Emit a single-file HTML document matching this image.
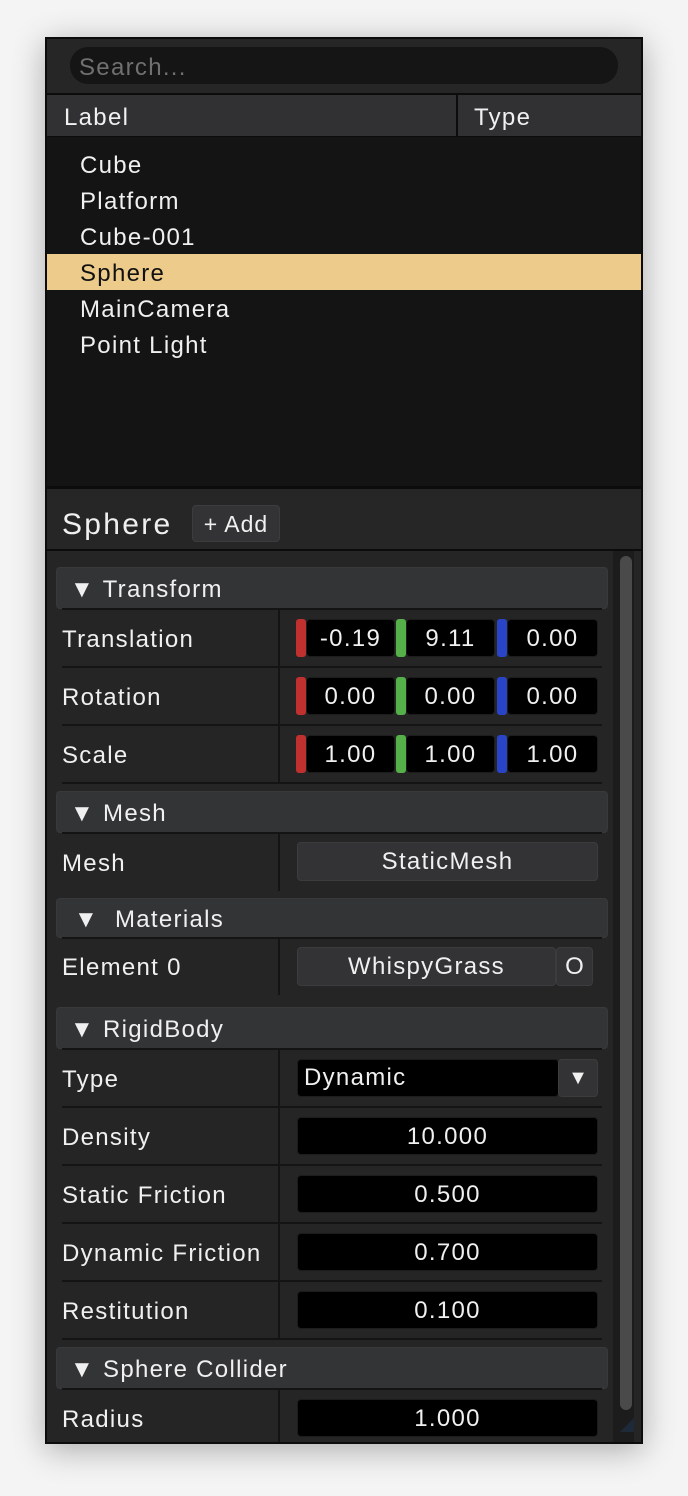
<!DOCTYPE html>
<html><head><meta charset="utf-8"><style>
*{margin:0;padding:0;box-sizing:border-box}
body{width:688px;height:1496px;background:#f4f4f4;position:relative;overflow:hidden;font-family:"Liberation Sans",sans-serif;color:#f0f0f0;letter-spacing:1.3px}
.a{position:absolute}
.t{position:absolute;font-size:24px;line-height:26px;white-space:nowrap;margin-top:2px}
.hdr{position:absolute;left:56px;width:552px;height:42px;background:#333436;border-radius:4px;border:1px solid #38393b}
.sep{position:absolute;left:62px;width:540px;height:2px;background:#141414}
.col{position:absolute;left:278px;width:2px;background:#141414}
.fld{position:absolute;background:#000;border-radius:4px;border:1px solid #1c1c1c;text-align:center;font-size:24px;line-height:38px}
.btn{position:absolute;background:#333335;border-radius:4px;border:1px solid #3c3c3e;text-align:center;font-size:24px;line-height:38px}
.bar{position:absolute;width:10px;border-radius:3px}
</style></head><body>
<div class="a" style="left:45px;top:37px;width:598px;height:1407px;box-shadow:0 6px 30px rgba(0,0,0,0.3)"></div>
<div class="a" style="left:45px;top:37px;width:598px;height:1407px;background:#0c0c0c"></div>
<!-- top panel -->
<div class="a" style="left:47px;top:39px;width:594px;height:54px;background:#262626"></div>
<div class="a" style="left:70px;top:47px;width:548px;height:37px;background:#151515;border-radius:18px"></div>
<div class="t" style="left:79px;top:53px;color:#707070">Search...</div>
<div class="a" style="left:47px;top:95px;width:409px;height:41px;background:#313133"></div>
<div class="a" style="left:458px;top:95px;width:183px;height:41px;background:#313133"></div>
<div class="t" style="left:64px;top:103px">Label</div>
<div class="t" style="left:474px;top:103px">Type</div>
<div class="a" style="left:47px;top:137px;width:594px;height:349px;background:#141414"></div>
<div class="t" style="left:80px;top:151px">Cube</div>
<div class="t" style="left:80px;top:187px">Platform</div>
<div class="t" style="left:80px;top:223px">Cube-001</div>
<div class="a" style="left:47px;top:254px;width:594px;height:36px;background:#edcb8a"></div>
<div class="t" style="left:80px;top:259px;color:#111">Sphere</div>
<div class="t" style="left:80px;top:295px">MainCamera</div>
<div class="t" style="left:80px;top:331px">Point Light</div>
<!-- bottom panel -->
<div class="a" style="left:47px;top:489px;width:594px;height:60px;background:#262626"></div>
<div class="t" style="left:62px;top:506px;font-size:30px;line-height:34px;letter-spacing:2.3px">Sphere</div>
<div class="btn" style="left:192px;top:505px;width:88px;height:37px;line-height:37px;font-size:23px;letter-spacing:1px">+ Add</div>
<div class="a" style="left:47px;top:551px;width:594px;height:891px;background:#252525"></div>
<div class="a" style="left:613px;top:551px;width:21px;height:891px;background:#1c1c1c"></div>
<div class="a" style="left:620px;top:556px;width:12px;height:854px;background:#4a4a4a;border-radius:6px"></div>

<!-- Transform -->
<div class="hdr" style="top:567px"></div>
<div class="t" style="left:70px;top:575px">▼ Transform</div>
<div class="sep" style="top:608px"></div>
<div class="col" style="top:610px;height:172px"></div>
<div class="t" style="left:62px;top:625px">Translation</div>
<div class="sep" style="top:666px"></div>
<div class="t" style="left:62px;top:683px">Rotation</div>
<div class="sep" style="top:724px"></div>
<div class="t" style="left:62px;top:741px">Scale</div>
<div class="sep" style="top:782px"></div>

<div class="bar" style="left:296px;top:619px;height:38px;background:#c0302f"></div>
<div class="fld" style="left:306px;top:619px;width:89px;height:38px">-0.19</div>
<div class="bar" style="left:396px;top:619px;height:38px;background:#55b04a"></div>
<div class="fld" style="left:406px;top:619px;width:89px;height:38px">9.11</div>
<div class="bar" style="left:497px;top:619px;height:38px;background:#2a44c8"></div>
<div class="fld" style="left:507px;top:619px;width:91px;height:38px">0.00</div>

<div class="bar" style="left:296px;top:677px;height:38px;background:#c0302f"></div>
<div class="fld" style="left:306px;top:677px;width:89px;height:38px">0.00</div>
<div class="bar" style="left:396px;top:677px;height:38px;background:#55b04a"></div>
<div class="fld" style="left:406px;top:677px;width:89px;height:38px">0.00</div>
<div class="bar" style="left:497px;top:677px;height:38px;background:#2a44c8"></div>
<div class="fld" style="left:507px;top:677px;width:91px;height:38px">0.00</div>

<div class="bar" style="left:296px;top:735px;height:38px;background:#c0302f"></div>
<div class="fld" style="left:306px;top:735px;width:89px;height:38px">1.00</div>
<div class="bar" style="left:396px;top:735px;height:38px;background:#55b04a"></div>
<div class="fld" style="left:406px;top:735px;width:89px;height:38px">1.00</div>
<div class="bar" style="left:497px;top:735px;height:38px;background:#2a44c8"></div>
<div class="fld" style="left:507px;top:735px;width:91px;height:38px">1.00</div>

<!-- Mesh -->
<div class="hdr" style="top:791px"></div>
<div class="t" style="left:70px;top:799px">▼ Mesh</div>
<div class="sep" style="top:832px"></div>
<div class="col" style="top:834px;height:57px"></div>
<div class="t" style="left:62px;top:849px">Mesh</div>
<div class="btn" style="left:297px;top:842px;width:301px;height:39px">StaticMesh</div>

<!-- Materials -->
<div class="hdr" style="top:898px;height:40px"></div>
<div class="t" style="left:74px;top:905px">▼&nbsp; Materials</div>
<div class="sep" style="top:937px"></div>
<div class="col" style="top:939px;height:56px"></div>
<div class="t" style="left:62px;top:953px">Element 0</div>
<div class="btn" style="left:297px;top:947px;width:259px;height:39px">WhispyGrass</div>
<div class="btn" style="left:556px;top:947px;width:37px;height:39px;letter-spacing:0">O</div>

<!-- RigidBody -->
<div class="hdr" style="top:1007px"></div>
<div class="t" style="left:70px;top:1015px">▼ RigidBody</div>
<div class="sep" style="top:1048px"></div>
<div class="col" style="top:1050px;height:290px"></div>
<div class="t" style="left:62px;top:1065px">Type</div>
<div class="fld" style="left:297px;top:1059px;width:262px;height:38px;text-align:left;padding-left:6px;line-height:36px">Dynamic</div>
<div class="btn" style="left:558px;top:1059px;width:40px;height:38px;font-size:20px;letter-spacing:0;line-height:36px">▼</div>
<div class="sep" style="top:1106px"></div>
<div class="t" style="left:62px;top:1123px">Density</div>
<div class="fld" style="left:297px;top:1117px;width:301px;height:38px">10.000</div>
<div class="sep" style="top:1164px"></div>
<div class="t" style="left:62px;top:1181px">Static Friction</div>
<div class="fld" style="left:297px;top:1175px;width:301px;height:38px">0.500</div>
<div class="sep" style="top:1222px"></div>
<div class="t" style="left:62px;top:1239px">Dynamic Friction</div>
<div class="fld" style="left:297px;top:1233px;width:301px;height:38px">0.700</div>
<div class="sep" style="top:1280px"></div>
<div class="t" style="left:62px;top:1297px">Restitution</div>
<div class="fld" style="left:297px;top:1291px;width:301px;height:38px">0.100</div>
<div class="sep" style="top:1338px"></div>

<!-- Sphere Collider -->
<div class="hdr" style="top:1347px"></div>
<div class="t" style="left:70px;top:1355px">▼ Sphere Collider</div>
<div class="sep" style="top:1388px"></div>
<div class="col" style="top:1390px;height:52px"></div>
<div class="t" style="left:62px;top:1405px">Radius</div>
<div class="fld" style="left:297px;top:1399px;width:301px;height:38px">1.000</div>
<div class="a" style="left:620px;top:1418px;width:0;height:0;border-left:14px solid transparent;border-bottom:14px solid #1e2a3a"></div>
</body></html>
